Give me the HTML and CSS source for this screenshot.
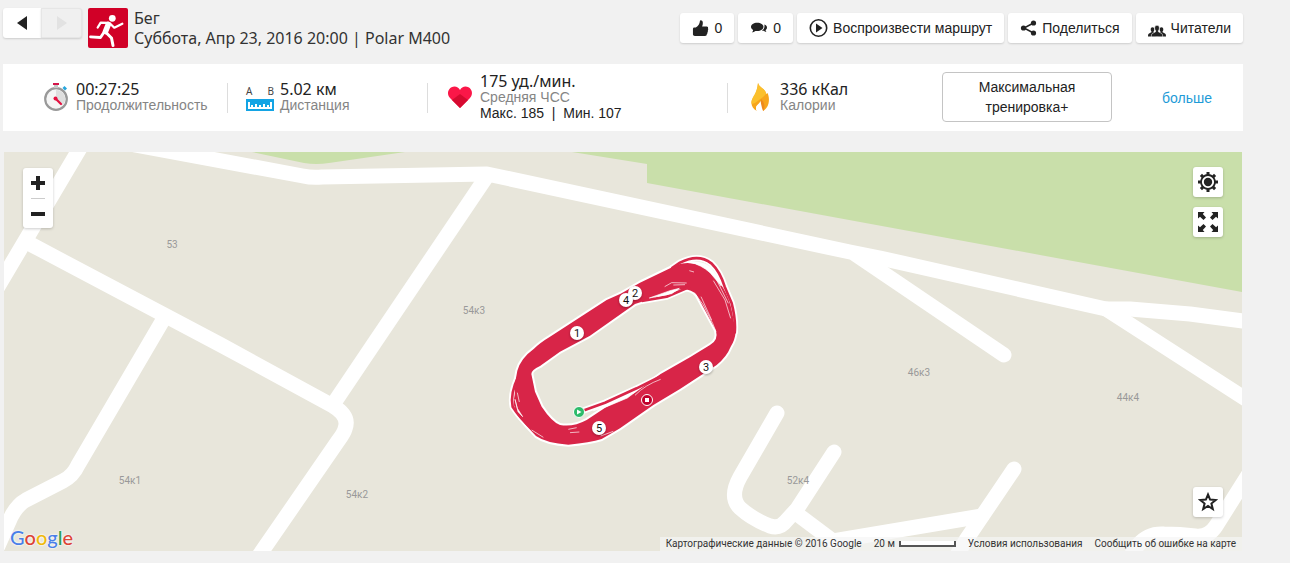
FILE: index.html
```html
<!DOCTYPE html>
<html lang="ru">
<head>
    <meta charset="UTF-8">
    <meta name="viewport" content="width=device-width, initial-scale=1.0">
    <title>Бег</title>
    <link rel="stylesheet" href="styles.css">
</head>
<body>
    <header class="top">
        <div class="pager">
            <button class="prev" aria-label="Назад"><svg width="12" height="16" viewBox="0 0 12 16"><path d="M11 1v14L1 8z"/></svg></button>
            <button class="next" aria-label="Вперед" disabled><svg width="12" height="16" viewBox="0 0 12 16"><path d="M1 1v14l10-7z"/></svg></button>
        </div>
        <svg class="sport" width="40" height="40" viewBox="0 0 40 40">
            <rect width="40" height="40" rx="2" fill="#d10027"/>
            <circle cx="24.300" cy="10.300" r="3.400" fill="#fff"/>
            <g fill="none" stroke="#fff" stroke-linecap="round" stroke-linejoin="round">
                <path d="M9.700 19.500l3-4.800 8 .3" stroke-width="2.300"/>
                <path d="M22 15.500l4.300 4.200 8-4" stroke-width="2.300"/>
                <path d="M20.300 16.500L17.500 23.500" stroke-width="5.600"/>
                <path d="M16.500 23.500l-4 6-10-.6" stroke-width="2.800"/>
                <path d="M18 24.500l5.500 5.500 1.500 7.500" stroke-width="3"/>
            </g>
        </svg>
        <div class="title">
            <h1>Бег</h1>
            <p>Суббота, Апр 23, 2016 20:00 | Polar M400</p>
        </div>
        <div class="actions">
            <button>
                <svg width="17" height="18" viewBox="0 0 18 18"><path d="M1 10q0-1.500 1.500-1.500H4Q8 6 8.500 1 11.500.2 11.500 3.500q0 2-.8 4h5q1.800.3 1.300 2 .5 1-.2 2 .4 1-.4 2 .3 1-.6 1.800 0 2.200-2 2.200H3q-2 0-2-1.500z"/></svg>
                0
            </button>
            <button>
                <svg width="18" height="16" viewBox="0 1 20 18"><path d="M8 4c4 0 7 2 7 4.700s-3 4.800-7 4.800l-2-.2c-1.200 1-2.500 1.400-4 1.400 1-.7 1.300-1.400 1.400-2.400C1.800 11.500 1 10.200 1 8.700 1 6 4 4 8 4z"/><path d="M16 6c2 .6 3 1.900 3 3.500 0 1.300-.6 2.200-1.600 2.900.1.900.5 1.500 1.200 2-1.400 0-2.600-.4-3.500-1.200l-2 0c2.500-1.400 3.600-4.200 2.900-7.200z"/></svg>
                0
            </button>
            <button>
                <svg width="19" height="20" viewBox="0 0 19 20"><circle cx="9.500" cy="10" r="8.200" fill="none" stroke="#222" stroke-width="1.600"/><path d="M7 5.500v9l6.500-4.500z"/></svg>
                Воспроизвести маршрут
            </button>
            <button>
                <svg width="17" height="16" viewBox="0 0 17 16"><path d="M13.500 3L4 8l9.500 5" fill="none" stroke="#222" stroke-width="1.500"/><circle cx="13.500" cy="3" r="2.600"/><circle cx="3.500" cy="8" r="2.600"/><circle cx="13.500" cy="13" r="2.600"/></svg>
                Поделиться
            </button>
            <button>
                <svg class="low" width="18" height="12" viewBox="0 0 18 12"><g id="man"><path d="M4.500 2.200c1.200 0 1.900.9 1.800 2.200 0 1-.4 1.500-.7 1.900v1l2 1.200v3H0c0-2 .3-2.700 1.500-3.200l1.900-1v-1c-.4-.4-.7-1-.7-1.900 0-1.300.7-2.200 1.800-2.200z"/></g><use href="#man" transform="matrix(-1 0 0 1 18 0)"/><path d="M9 .3c1.600 0 2.500 1.100 2.400 2.800 0 1.100-.5 1.900-1 2.400v1.300l3 1.500c1 .5 1.200 1.400 1.200 3.500H3.400c0-2.100.2-3 1.200-3.500l3-1.500V5.500c-.5-.5-1-1.300-1-2.400C6.600 1.400 7.400.3 9 .3z" stroke="#fff" stroke-width=".6"/></svg>
                Читатели
            </button>
        </div>
    </header>

    <section class="stats">
        <div class="stat">
            <svg width="28" height="30" viewBox="0 0 28 30">
                <circle cx="14" cy="17" r="10.800" fill="#f5f5f5" stroke="#999" stroke-width="2.200"/>
                <path d="M14 8a9 9 0 0 1 6.400 15.400L14 17z" fill="#dedede"/>
                <path d="M14 17l5 5" stroke="#e4103f" stroke-width="2.200" stroke-linecap="round"/>
                <circle cx="13.500" cy="16.500" r="2" fill="#e4103f"/>
                <path d="M11 1h6v2h-1v3h-4V3h-1z" fill="#c8c8c8"/><path d="M11 1h6v2h-6z" fill="#d5164a"/>
                <path d="M20.500 6l2-2 2.500 2.500-2 2z" fill="#26a5dc"/>
            </svg>
            <dl><dt>00:27:25</dt><dd>Продолжительность</dd></dl>
        </div>
        <div class="stat">
            <div class="ruler">
                <span>A</span><span>B</span>
                <svg width="28" height="12" viewBox="0 0 28 12"><path d="M0 0h28v12H0z" fill="#14a4e4"/><path d="M2 3h24v7H2z" fill="#fff"/><path d="M4 3h20v5h-1V6h-2v2h-2V5h-2v3h-2V6h-2v2h-2V5H9v3H7V6H5v2H4z" fill="#14a4e4"/></svg>
            </div>
            <dl><dt>5.02 км</dt><dd>Дистанция</dd></dl>
        </div>
        <div class="stat">
            <svg width="28" height="26" viewBox="0 0 28 26">
                <path d="M14 24L4 14C.5 10 2 5 5.500 3.200 9 1.500 12.500 3 14 6c1.500-3 5-4.500 8.500-2.800C26 5 27.500 10 24 14z" fill="#fb1748"/>
                <path d="M14 10l8 6-8 8-8-8z" fill="#d60a30"/>
            </svg>
            <dl><dt>175 уд./мин.</dt><dd>Средняя ЧСС</dd><dd class="range">Макс. 185 &nbsp;|&nbsp; Мин. 107</dd></dl>
        </div>
        <div class="stat">
            <svg width="28" height="28" viewBox="0 0 28 28">
                <path d="M12 0c1 4 5 5 7 8 1 1.500 1 3 1 3l1.500-1c1.500 3 1.800 7 1 10.500-.8 3.500-3 6-5.500 7.500 1-3 1-6-2.500-10-1 3-4.500 4-4.500 7 0 1 .2 2 1 3-4-2-6-5.500-5.500-9.500C6 15 11 12 12 0z" fill="#f7a51c"/>
                <path d="M12 0c1 4 5 5 7 8 1 1.500 1 3 1 3l-3 3-8 6-3.300 1C4.500 14 11 12 12 0z" fill="#fbc02d"/>
                <path d="M15 16c4 4 4 8 2.500 12l-3-1-.5-4z" fill="#ee8a1c"/>
                <path d="M14.500 18.500c-1 3-4.500 4-4.500 7 0 1 .2 1.500 1 2.500h6l-1-3z" fill="#fff"/>
            </svg>
            <dl><dt>336 кКал</dt><dd>Калории</dd></dl>
        </div>
        <div class="benefit"><button>Максимальная тренировка+</button></div>
        <div class="more"><a href="#">больше</a></div>
    </section>

    <section class="map">
        <svg class="canvas" viewBox="4 152 1238 399">
            <path class="land" d="M4 152h1238v399H4z"/>
            <path class="park" d="M572 152l75 12v19l595 109V152zM252 152l52 11q12 2 25 0l76-11z"/>
            <g class="roads">
                <path d="M86 138L-4 290"/>
                <path d="M32 245L221 345 333 406Q350 416 345 429 344 433 338 441L258 557"/>
                <path d="M163 320L78 465Q73 476 63 481L26 500Q17 505 11 517L-2 546"/>
                <path d="M487 176L373 345 334 403"/>
                <path d="M130 144L303 176Q312 178 322 177L487 174 850 252 880 258 1106 309 1130 309 1190 314 1250 322"/>
                <path d="M855 254L1004 355"/>
                <path d="M1106 309L1252 403"/>
                <path d="M777 413L740 477Q729 497 740 508 752 519 770 526 780 529 786 521L797 509 834 452"/>
                <path d="M797 514L833 541 982 516"/>
                <path d="M1014 469L966 540 954 560"/>
                <path d="M1250 472L1216 526Q1208 538 1195 536 1180 534 1164 534 1148 533 1138 545L1128 560"/>
            </g>
            <g class="house">
                <text x="172" y="248">53</text>
                <text x="474" y="314">54к3</text>
                <text x="130" y="484">54к1</text>
                <text x="357" y="498">54к2</text>
                <text x="919" y="376">46к3</text>
                <text x="1128" y="401">44к4</text>
                <text x="798" y="484">52к4</text>
            </g>
            <svg x="490" y="240" width="270" height="220" viewBox="0 0 810 660">
                <g class="halo">
                    <path d="M545 85L570 68Q625 40 664 70 690 95 704 140L725 190Q738 240 734 280"/>
                    <path d="M270 515L345 488 440 445 520 407"/>
                    <path d="M455 183L530 170 600 140M85 410Q60 460 68 500 90 535 130 570"/>
                </g>
                <path class="track" d="M132 326Q150 308 180 290L350 180 392 161 450 128 562 74Q600 62 640 80 672 98 700 145 720 180 727 220L737 275Q735 300 722 320 710 350 680 375L570 447 490 495 390 565Q360 583 335 597 300 608 235 614 170 610 138 588L110 558 82 525Q66 495 74 465L76 425 82 392Q92 355 132 326z
                    M124 402Q124 390 150 378L210 335 300 287 400 217 435 192 490 174 545 152Q600 140 620 165L678 272Q686 300 660 315L600 352 512 402 438 456 350 500 290 540Q250 562 210 555 185 545 155 500L135 455z"/>
                <g class="lap">
                    <path d="M545 85L570 68Q625 40 664 70 690 95 704 140L725 190Q738 240 734 280"/>
                    <path d="M270 515L345 488 440 445 520 405"/>
                    <path d="M455 183L530 170 600 140M85 410Q60 460 68 500 90 535 130 570"/>
                </g>
                <g class="gap">
                    <path d="M598 66Q645 62 665 86T694 138L660 98Q635 75 598 66" fill="#fff"/>
                    <path d="M478 174L540 152 568 145 545 161z" fill="#fff"/>
                    <path d="M524 140L545 128 590 129M550 135L585 134"/>
                    <path d="M310 512L360 490 436 456 412 474 350 500z" fill="#fff"/>
                    <path d="M435 466Q465 435 512 418"/>
                    <path d="M613 158L640 195 668 250 678 275M633 170L665 240M670 122L705 180 722 235M680 120L715 190"/>
                    <path d="M75 478L82 505 98 530 84 515z" fill="#fff"/>
                    <path d="M82 458L88 486M125 570L160 592M235 568L260 563M240 578L268 576M332 588L370 574M598 92L612 96"/>
                </g>
            </svg>
            <g class="pins">
                <circle cx="635" cy="293" r="7"/><text x="635" y="297">2</text>
                <circle cx="626" cy="300" r="7"/><text x="626" y="304">4</text>
                <circle cx="577" cy="333" r="7"/><text x="577" y="337">1</text>
                <circle cx="706" cy="367" r="7"/><text x="706" y="371">3</text>
                <circle cx="599" cy="428" r="7"/><text x="599" y="432">5</text>
            </g>
            <circle cx="579" cy="412" r="5.500" fill="#2dbb6a" stroke="#fff"/>
            <path d="M577 409.500v5l4.500-2.500z" fill="#fff"/>
            <circle cx="647" cy="400" r="5.500" fill="#c1002b" stroke="#fff"/>
            <path d="M645 398h4v4h-4z" fill="#fff"/>
        </svg>

        <div class="zoom">
            <button aria-label="Увеличить"><svg width="14" height="14" viewBox="0 0 14 14"><path d="M5 0h4v5h5v4H9v5H5V9H0V5h5z"/></svg></button>
            <button aria-label="Уменьшить"><svg width="14" height="14" viewBox="0 0 14 14"><path d="M0 5h14v4H0z"/></svg></button>
        </div>
        <div class="tools">
            <button aria-label="Настройки"><svg width="20" height="20" viewBox="0 0 20 20"><circle cx="10" cy="10" r="7" fill="none" stroke="#222" stroke-width="1.800"/><circle cx="10" cy="10" r="4.200"/><g id="cog"><path d="M8.500 0h3v3.500h-3zM8.500 16.500h3V20h-3zM0 8.500h3.500v3H0zM16.500 8.500H20v3h-3.500z"/></g><use href="#cog" transform="rotate(45 10 10)"/></svg></button>
            <button aria-label="На весь экран"><svg width="20" height="20" viewBox="0 0 20 20"><g id="arrow"><path d="M0 0h6.500L4.800 2 8 5.500 5.500 8 2 4.800 0 6.500z"/></g><use href="#arrow" transform="rotate(90 10 10)"/><use href="#arrow" transform="rotate(180 10 10)"/><use href="#arrow" transform="rotate(270 10 10)"/></svg></button>
        </div>
        <button class="star" aria-label="В избранное"><svg width="20" height="20" viewBox="0 0 20 20"><path d="M10 2.500l2.100 5.100 5.600.4-4.300 3.600 1.400 5.400-4.800-3L5.200 17l1.400-5.400L2.300 8l5.600-.4z" fill="none" stroke="#222" stroke-width="2"/></svg></button>
        <a class="google" href="#"><span class="b">G</span><span class="r">o</span><span class="y">o</span><span class="b">g</span><span class="g">l</span><span class="r">e</span></a>
        <div class="credits">
            <span>Картографические данные © 2016 Google</span>
            <span class="scale">20 м <i></i></span>
            <a href="#">Условия использования</a>
            <a href="#">Сообщить об ошибке на карте</a>
        </div>
    </section>
</body>
</html>
```
FILE: styles.css
```css
*{
    box-sizing: border-box;
}
body{
    margin: 0;
    padding: 8px 47px 12px 3px;
    background: #f1f1f1;
    color: #222;
    font-family: "Liberation Sans", Arial, sans-serif;
    font-size: 14px;
}
h1, p, dl, dd{
    margin: 0;
}
svg{
    display: block;
    fill: #222;
}
button{
    padding: 0;
    border: 0;
    background: #fff;
    color: #222;
    font: inherit;
    cursor: pointer;
}
a{
    text-decoration: none;
}

/* header */
.top{
    display: flex;
    align-items: flex-start;
    height: 56px;
}
.pager{
    display: flex;
    margin-right: 6px;
}
.pager button{
    display: flex;
    align-items: center;
    justify-content: center;
    width: 38px;
    height: 30px;
    border-radius: 3px 0 0 3px;
    box-shadow: 0 1px 2px rgba(0,0,0,.15);
}
.pager .next{
    width: 41px;
    background: #f0f0f0;
    border-radius: 0 3px 3px 0;
    border: 1px solid #e6e6e6;
}
.next svg{
    fill: #e2e2e2;
}
.title{
    margin-left: 6px;
    font-family: "Noto Sans", sans-serif;
    font-size: 16px;
    line-height: 20px;
    color: #333;
}
.title h1{
    font-size: 16px;
    font-weight: normal;
}
.actions{
    display: flex;
    gap: 4px;
    margin: 5px 0 0 auto;
}
.actions button{
    display: flex;
    align-items: center;
    gap: 5px;
    height: 30px;
    padding: 0 12px;
    border-radius: 3px;
    box-shadow: 0 1px 2px rgba(0,0,0,.15);
    white-space: nowrap;
}
.low{
    margin-top: 6px;
}

/* summary */
.stats{
    display: grid;
    grid-template-columns: 224fr 200fr 300fr 200fr 200fr 116fr;
    align-items: center;
    height: 67px;
    background: #fff;
}
.stat{
    display: flex;
    align-items: center;
    gap: 6px;
    height: 30px;
    padding-left: 18px;
    padding-bottom: 2px;
    border-left: 1px solid #ddd;
    white-space: nowrap;
}
.stat:first-child{
    padding-left: 38px;
    border-left-color: transparent;
}
.stat dl{
    line-height: 16px;
}
.stat dt{
    font-family: "Noto Sans", sans-serif;
    font-size: 16px;
}
.stat dd{
    color: #858585;
}
.stat .range{
    color: #222;
}
.ruler{
    display: flex;
    flex-wrap: wrap;
    justify-content: space-between;
    width: 28px;
    font-family: "Noto Sans", sans-serif;
    font-size: 10px;
    line-height: 16px;
    color: #444;
}
.benefit, .more{
    text-align: center;
}
.benefit{
    padding-bottom: 2px;
}
.more{
    padding-left: 4px;
}
.benefit button{
    width: 170px;
    height: 50px;
    padding: 0 30px;
    border: 1px solid #c4c4c4;
    border-radius: 4px;
    line-height: 20px;
}
.more a{
    color: #1e9bd7;
}

/* map */
.map{
    position: relative;
    margin: 21px 1px 0;
}
.canvas{
    width: 100%;
    height: auto;
}
.land{
    fill: #e8e6db;
}
.park{
    fill: #c9dfaa;
}
.roads{
    fill: none;
    stroke: #fff;
    stroke-width: 15px;
    stroke-linecap: round;
    stroke-linejoin: round;
}
.house{
    fill: #999;
    font-family: Roboto, sans-serif;
    font-size: 10px;
    text-anchor: middle;
}
.halo, .lap, .gap{
    fill: none;
    stroke: #fff;
    stroke-width: 19px;
    stroke-linejoin: round;
}
.lap{
    stroke: #d82548;
    stroke-width: 8px;
}
.gap{
    stroke-width: 2px;
}
.track{
    fill: #d82548;
    fill-rule: evenodd;
    stroke: #fff;
    stroke-width: 12px;
    stroke-linejoin: round;
    paint-order: stroke;
}
.pins{
    fill: #fff;
    font-family: Roboto, sans-serif;
    font-size: 11px;
    text-anchor: middle;
}
.pins circle{
    filter: drop-shadow(0 1px 1px rgba(0,0,0,.3));
}
.pins text{
    fill: #111;
}
.zoom{
    position: absolute;
    top: 16px;
    left: 19px;
    width: 30px;
    background: #fff;
    border-radius: 3px;
    box-shadow: 0 1px 3px rgba(0,0,0,.2);
}
.zoom button{
    display: flex;
    align-items: center;
    justify-content: center;
    width: 14px;
    height: 30px;
    margin: 0 8px;
    background: none;
}
.zoom button + button{
    border-top: 1px solid #ccc;
}
.tools{
    position: absolute;
    top: 15px;
    right: 19px;
    display: grid;
    gap: 10px;
}
.tools button, .star{
    display: flex;
    align-items: center;
    justify-content: center;
    width: 30px;
    height: 30px;
    border-radius: 3px;
    box-shadow: 0 1px 3px rgba(0,0,0,.2);
}
.star{
    position: absolute;
    right: 19px;
    bottom: 34px;
}
.google{
    position: absolute;
    left: 6px;
    bottom: 2px;
    font-family: Lato, sans-serif;
    font-size: 20px;
    font-weight: 500;
    line-height: 24px;
    text-shadow: 0 0 2px #fff, 0 0 2px #fff;
}
.b{
    color: #4a80e8;
}
.r{
    color: #dc4437;
}
.y{
    color: #efb90c;
}
.g{
    color: #2c9f52;
}
.credits{
    position: absolute;
    right: 0;
    bottom: 0;
    display: flex;
    height: 14px;
    background: rgba(245,245,245,.7);
    font-family: Roboto, sans-serif;
    font-size: 10px;
    line-height: 14px;
    white-space: nowrap;
}
.credits > *{
    padding: 0 6px;
    color: #333;
}
.scale{
    display: flex;
    align-items: center;
    gap: 4px;
}
.scale i{
    width: 57px;
    height: 6px;
    border: 2px solid #555;
    border-width: 0 2px 2px;
    background: #fff;
}
```
